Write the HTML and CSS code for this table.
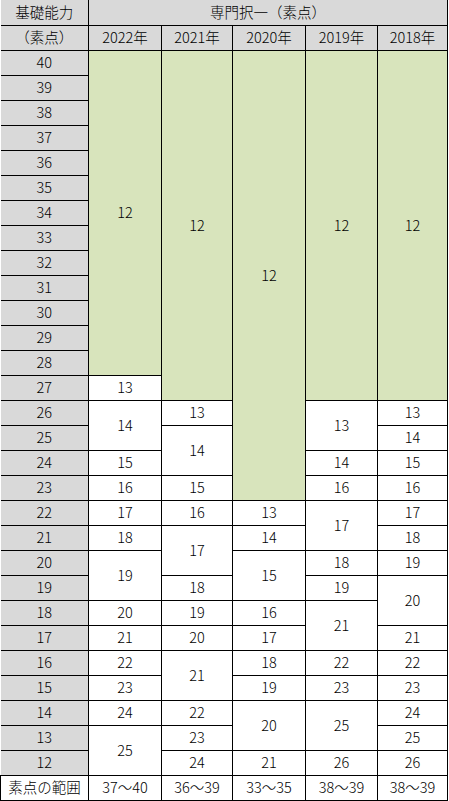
FILE: index.html
```html
<!DOCTYPE html>
<html lang="ja">
<head>
<meta charset="utf-8">
<title>基礎能力と専門択一</title>
<link rel="stylesheet" href="styles.css">
</head>
<body>
<table class="score">
<colgroup>
<col class="c-base"><col class="c-y1"><col class="c-y2"><col class="c-y3"><col class="c-y4"><col class="c-y5">
</colgroup>
<thead>
<tr class="h1"><th class="side">基礎能力</th><th colspan="5">専門択一（素点）</th></tr>
<tr class="h2"><th class="side">（素点）</th><th>2022年</th><th>2021年</th><th>2020年</th><th>2019年</th><th>2018年</th></tr>
</thead>
<tbody>
<tr><th class="side">40</th><td class="g" rowspan="13">12</td><td class="g" rowspan="14">12</td><td class="g" rowspan="18">12</td><td class="g" rowspan="14">12</td><td class="g" rowspan="14">12</td></tr>
<tr><th class="side">39</th></tr>
<tr><th class="side">38</th></tr>
<tr><th class="side">37</th></tr>
<tr><th class="side">36</th></tr>
<tr><th class="side">35</th></tr>
<tr><th class="side">34</th></tr>
<tr><th class="side">33</th></tr>
<tr><th class="side">32</th></tr>
<tr><th class="side">31</th></tr>
<tr><th class="side">30</th></tr>
<tr><th class="side">29</th></tr>
<tr><th class="side">28</th></tr>
<tr><th class="side">27</th><td>13</td></tr>
<tr><th class="side">26</th><td rowspan="2">14</td><td>13</td><td rowspan="2">13</td><td>13</td></tr>
<tr><th class="side">25</th><td rowspan="2">14</td><td>14</td></tr>
<tr><th class="side">24</th><td>15</td><td>14</td><td>15</td></tr>
<tr><th class="side">23</th><td>16</td><td>15</td><td>16</td><td>16</td></tr>
<tr><th class="side">22</th><td>17</td><td>16</td><td>13</td><td rowspan="2">17</td><td>17</td></tr>
<tr><th class="side">21</th><td>18</td><td rowspan="2">17</td><td>14</td><td>18</td></tr>
<tr><th class="side">20</th><td rowspan="2">19</td><td rowspan="2">15</td><td>18</td><td>19</td></tr>
<tr><th class="side">19</th><td>18</td><td>19</td><td rowspan="2">20</td></tr>
<tr><th class="side">18</th><td>20</td><td>19</td><td>16</td><td rowspan="2">21</td></tr>
<tr><th class="side">17</th><td>21</td><td>20</td><td>17</td><td>21</td></tr>
<tr><th class="side">16</th><td>22</td><td rowspan="2">21</td><td>18</td><td>22</td><td>22</td></tr>
<tr><th class="side">15</th><td>23</td><td>19</td><td>23</td><td>23</td></tr>
<tr><th class="side">14</th><td>24</td><td>22</td><td rowspan="2">20</td><td rowspan="2">25</td><td>24</td></tr>
<tr><th class="side">13</th><td rowspan="2">25</td><td>23</td><td>25</td></tr>
<tr><th class="side">12</th><td>24</td><td>21</td><td>26</td><td>26</td></tr>
</tbody>
<tfoot>
<tr><th class="side foot">素点の範囲</th><td>37〜40</td><td>36〜39</td><td>33〜35</td><td>38〜39</td><td>38〜39</td></tr>
</tfoot>
</table>
</body>
</html>
```
FILE: styles.css
```css
html, body {
  margin: 0;
  padding: 0;
  background: #ffffff;
}

.score {
  border-collapse: collapse;
  table-layout: fixed;
  width: 447px;
  font-family: "Noto Sans CJK JP", "Noto Sans", sans-serif;
  font-size: 14.5px;
  font-weight: 300;
  color: #000000;
}

.c-base { width: 88px; }
.c-y1 { width: 73px; }
.c-y2 { width: 71px; }
.c-y3 { width: 73px; }
.c-y4 { width: 72px; }
.c-y5 { width: 70px; }

.score tr {
  height: 25px;
}

.score th,
.score td {
  border: 1px solid #000000;
  padding: 0;
  line-height: 1;
  text-align: center;
  vertical-align: middle;
  font-weight: 300;
  white-space: nowrap;
  background: #ffffff;
}

.score thead th {
  background: #d9d9d9;
}

.score .h1 th {
  border-top: none;
}

.score .side {
  background: #d9d9d9;
  border-left: none;
}

.score .side.foot {
  background: #ffffff;
  border-left: 1px solid #000000;
}

.score td.g {
  background: #d8e4bc;
}
```
